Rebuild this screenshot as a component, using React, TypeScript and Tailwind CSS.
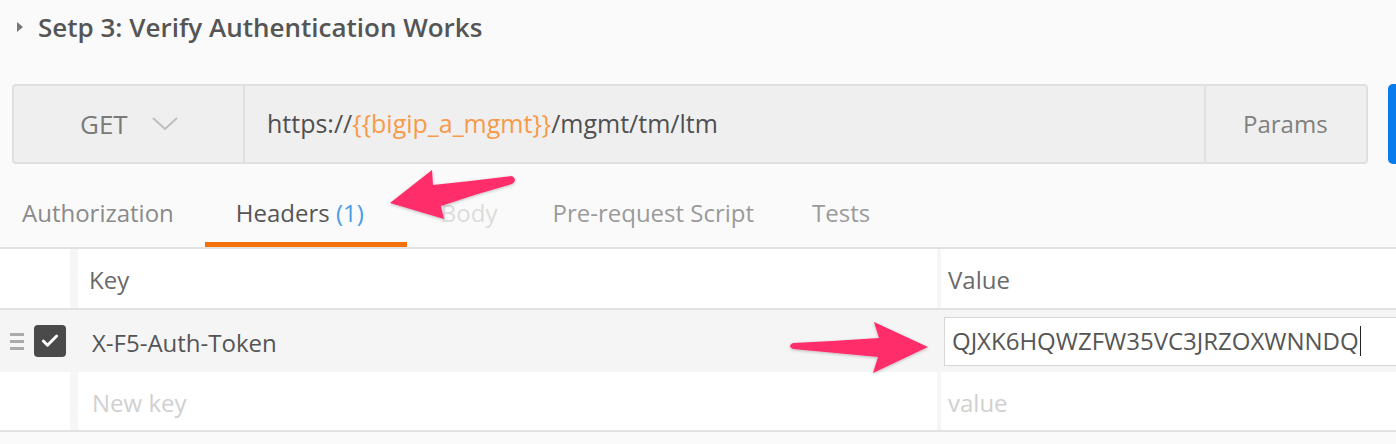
import { Check } from "lucide-react";

const tabs = [
  { label: "Authorization", gap: "ml-[22px]", color: "text-[#8a8a8a]" },
  { label: "Body", gap: "ml-[34px]", color: "text-[#dcdcdc]" },
  { label: "Pre-request Script", gap: "ml-[55px]", color: "text-[#9a9a9a]" },
  { label: "Tests", gap: "ml-[58px]", color: "text-[#9a9a9a]" },
];

const Arrows = () => (
  <svg
    className="pointer-events-none absolute left-0 top-0"
    width="1396"
    height="444"
    viewBox="0 0 1396 444"
  >
    <defs>
      <filter id="sh" x="-20%" y="-20%" width="140%" height="140%">
        <feDropShadow dx="0" dy="1" stdDeviation="1.5" floodColor="#000" floodOpacity="0.25" />
      </filter>
    </defs>
    <path
      d="M390,203 L432,170 L433,185 Q472,181 512,176 Q518,180 512,184 Q476,194 441,206 L444,219 Z"
      fill="#ff2d6b"
      strokeLinejoin="round"
      filter="url(#sh)"
    />
    <path
      d="M928,347 L874,322 L879,338 Q836,341 793,343 Q787,346 793,349 Q836,353 878,357 L873,373 Z"
      fill="#ff2d6b"
      strokeLinejoin="round"
      filter="url(#sh)"
    />
  </svg>
);

export default function App() {
  return (
    <div className="relative h-[444px] w-[1396px] overflow-hidden bg-[#fafafa] font-['Open_Sans',sans-serif]">
      {/* Section title */}
      <div className="flex h-[54px] items-center pl-[17px]">
        <span className="h-0 w-0 border-y-[5px] border-l-[6px] border-y-transparent border-l-[#777]" />
        <h2 className="ml-[15px] text-[26px] font-semibold text-[#555]">
          Setp 3: Verify Authentication Works
        </h2>
      </div>

      {/* Request bar */}
      <div className="mt-[30px] flex pl-[12px]">
        <div className="flex h-[80px] w-[1356px] shrink-0 rounded-[4px] border-2 border-[#e0e0e0] bg-[#efefef]">
          <div className="flex w-[231px] items-center border-r-2 border-[#e0e0e0] pl-[66px]">
            <span className="text-[26px] text-[#7a7a7a]">GET</span>
            <svg className="ml-[24px]" width="26" height="16" viewBox="0 0 26 16">
              <path d="M1 2 L13 13 L25 2" fill="none" stroke="#bdbdbd" strokeWidth="2" />
            </svg>
          </div>
          <div className="flex flex-1 items-center pl-[22px] text-[25px] text-[#505050]">
            https://<span className="text-[#f79a4a]">{"{{bigip_a_mgmt}}"}</span>/mgmt/tm/ltm
          </div>
          <div className="flex w-[162px] items-center border-l-2 border-[#e0e0e0] pl-[37px] text-[24px] text-[#808080]">
            Params
          </div>
        </div>
        <div className="ml-[20px] h-[80px] w-[20px] shrink-0 rounded-l-[5px] bg-[#097bed]" />
      </div>

      {/* Tabs */}
      <div className="flex h-[85px] items-center border-b-2 border-[#e2e2e2] pt-[15px]">
        <span className={`${tabs[0].gap} text-[24px] ${tabs[0].color}`}>{tabs[0].label}</span>
        <div className="relative ml-[31px] flex h-full w-[202px] items-center pl-[31px]">
          <span className="text-[24px] text-[#555]">
            Headers <span className="text-[#4a9ce8]">(1)</span>
          </span>
          <span className="absolute bottom-0 left-0 h-[5px] w-full bg-[#f5720b]" />
        </div>
        {tabs.slice(1).map((t) => (
          <span key={t.label} className={`${t.gap} text-[24px] ${t.color}`}>
            {t.label}
          </span>
        ))}
      </div>

      {/* Headers table */}
      <div className="border-b-2 border-[#e2e2e2]">
        <div className="flex h-[61px] border-b-2 border-[#e2e2e2] bg-white">
          <div className="w-[70px]" />
          <div className="w-[8px] bg-[#f6f6f6]" />
          <div className="flex w-[859px] items-center pl-[11px] pt-[3px] text-[24px] text-[#6a6a6a]">Key</div>
          <div className="w-[4px] bg-[#f6f6f6]" />
          <div className="flex flex-1 items-center pl-[7px] pt-[3px] text-[24px] text-[#6a6a6a]">Value</div>
        </div>
        <div className="flex h-[62px] items-center bg-[#f5f5f5]">
          <div className="ml-[10px] flex w-[14px] flex-col gap-[4px]">
            <span className="h-[3px] bg-[#aaa]" />
            <span className="h-[3px] bg-[#aaa]" />
            <span className="h-[3px] bg-[#aaa]" />
          </div>
          <div className="ml-[10px] flex h-[32px] w-[32px] items-center justify-center rounded-[4px] bg-[#4a4a4a]">
            <Check size={20} strokeWidth={3.5} color="#fff" />
          </div>
          <div className="ml-[26px] w-[852px] pt-[3px] text-[24px] text-[#555]">X-F5-Auth-Token</div>
          <div className="flex h-[49px] flex-1 items-center border border-r-0 border-[#d6d6d6] bg-white pl-[7px] text-[24px] text-[#555]">
            QJXK6HQWZFW35VC3JRZOXWNNDQ
            <span className="ml-[1px] h-[30px] w-[1px] bg-[#222]" />
          </div>
        </div>
        <div className="flex h-[58px] bg-white">
          <div className="w-[70px]" />
          <div className="w-[8px] bg-[#f6f6f6]" />
          <div className="flex w-[859px] items-center pl-[14px] pt-[4px] text-[24px] text-[#d0d0d0]">New key</div>
          <div className="w-[4px] bg-[#f6f6f6]" />
          <div className="flex flex-1 items-center pl-[7px] pt-[4px] text-[24px] text-[#d0d0d0]">value</div>
        </div>
      </div>

      <Arrows />
    </div>
  );
}
